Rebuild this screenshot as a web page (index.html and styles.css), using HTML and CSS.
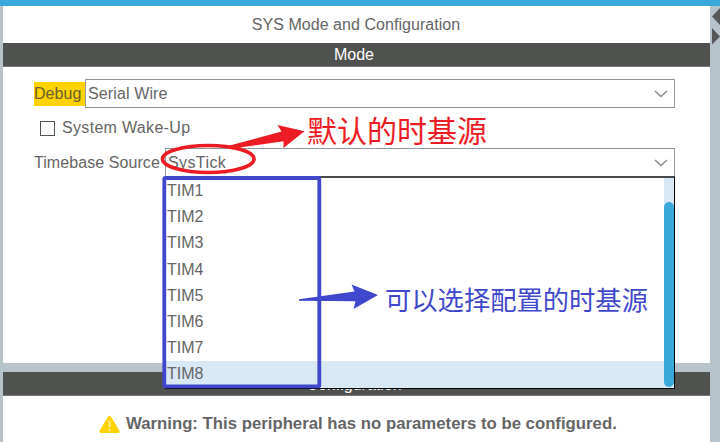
FILE: index.html
```html
<!DOCTYPE html>
<html lang="zh-CN">
<head>
<meta charset="utf-8">
<title>SYS Mode and Configuration</title>
<link rel="stylesheet" href="styles.css">
</head>
<body>
<div class="window">
  <main class="content">
    <section class="panel mode-panel">
      <h1 class="title">SYS Mode and Configuration</h1>
      <h2 class="bar">Mode</h2>
      <div class="form">
        <div class="row debug-row">
          <span class="label highlighted">Debug</span>
          <div class="combo"><span>Serial Wire</span>
            <svg class="chevron" width="14" height="8" viewBox="0 0 14 8"><path d="M1 1L7 6.5L13 1"/></svg>
          </div>
        </div>
        <div class="row check-row"><span class="checkbox"></span><span>System Wake-Up</span></div>
        <div class="row source-row">
          <span class="label">Timebase Source</span>
          <div class="combo"><span class="value">SysTick</span>
            <svg class="chevron" width="14" height="8" viewBox="0 0 14 8"><path d="M1 1L7 6.5L13 1"/></svg>
            <div class="dropdown">
              <ul class="options">
                <li>TIM1</li><li>TIM2</li><li>TIM3</li><li>TIM4</li><li>TIM5</li><li>TIM6</li><li>TIM7</li><li class="selected">TIM8</li>
              </ul>
              <div class="scrollbar"><div class="thumb"></div></div>
            </div>
          </div>
        </div>
      </div>
    </section>
    <section class="panel config-panel">
      <h2 class="bar">Configuration</h2>
      <p class="warning">
        <svg width="21" height="19" viewBox="0 0 21 19"><path d="M10.5 2.5L18.8 16.3H2.2Z" fill="#ffd200" stroke="#ffd200" stroke-width="3.4" stroke-linejoin="round"/><path d="M10.5 5.5V12M10.5 14V16" stroke="#fff3b0" stroke-width="1.6"/></svg>
        <span>Warning: This peripheral has no parameters to be configured.</span>
      </p>
    </section>
  </main>
  <aside class="divider">
    <svg width="10" height="40" viewBox="0 0 10 40"><path d="M2 10.5L10 2V19Z"/><path d="M2 22V38.5L10 30.5Z"/></svg>
  </aside>
</div>
<svg class="marks" width="720" height="442" viewBox="0 0 720 442">
  <rect x="164.3" y="178" width="155" height="208.3" rx="1" fill="none" stroke="#3f48cc" stroke-width="3.8"/>
  <path fill="#3f48cc" d="M299 299.2L354.5 291.5L351.5 284.5L378 295L353.5 309L355.5 301.3L299 300.8Z"/>
  <ellipse cx="208.3" cy="159" rx="45.8" ry="13.5" fill="none" stroke="#ed1c24" stroke-width="3.6"/>
  <path fill="#ed1c24" d="M226 146.5L281.5 131.5L277.5 125L304.5 131.3L283.5 148L283.5 141.2L243 147L232 149.5Z"/>
</svg>
<div class="note default-note">默认的时基源</div>
<div class="note option-note">可以选择配置的时基源</div>
</body>
</html>
```
FILE: styles.css
```css
* { box-sizing: border-box; }
body {
  margin: 0;
  width: 720px;
  height: 442px;
  overflow: hidden;
  position: relative;
  font: 16px/24px "Liberation Sans", Arial, sans-serif;
  color: #656565;
  background: #b7c3ca;
}
h1, h2, p, ul { margin: 0; padding: 0; font: inherit; }
.window {
  display: flex;
  height: 442px;
  border-top: 6px solid #39a9dc;
  padding-left: 3px;
}
.content {
  width: 707px;
  display: flex;
  flex-direction: column;
  gap: 9px;
}
.panel { background: #fff; }
.mode-panel { height: 357px; flex: none; }
.config-panel { flex: 1; }
.title {
  height: 37px;
  line-height: 37px;
  text-align: center;
  letter-spacing: 0.05px;
  padding-right: 1px;
}
.bar {
  height: 24px;
  line-height: 24px;
  text-align: center;
  background: #50524f;
  color: #fff;
  border-bottom: 1px solid #777;
  padding-right: 5px;
}
.config-panel .bar { line-height: 26px; }
.form { padding: 12px 35px 0 31px; }
.row { display: flex; align-items: center; }
.debug-row { height: 29px; letter-spacing: 0.12px; }
.label { width: 131px; flex: none; letter-spacing: 0.07px; }
.highlighted { width: 51px; background: #ffd200; color: #6b602c; }
.combo {
  flex: 1;
  height: 29px;
  display: flex;
  align-items: center;
  justify-content: space-between;
  border: 1px solid #91989d;
  padding: 0 6px 0 2px;
  position: relative;
}
.value { letter-spacing: 0.4px; }
.chevron { fill: none; stroke: #8c8c8c; stroke-width: 1.6; }
.check-row { height: 40px; gap: 7px; padding-left: 6px; letter-spacing: 0.32px; }
.checkbox { width: 15px; height: 15px; border: 1px solid #555; }
.source-row { height: 29px; }
.dropdown {
  position: absolute;
  top: 27px;
  left: -1px;
  right: -1px;
  height: 213px;
  display: flex;
  border: 1px solid #000;
  border-top: 2px solid #464a4c;
  background: #fff;
}
.options { flex: 1; list-style: none; }
.options li { height: 26.2px; line-height: 26px; padding-left: 1px; }
.options .selected { background: #d9e8f5; }
.scrollbar { width: 10px; padding-top: 24px; background: #d9e8f5; }
.thumb { height: 185px; border-radius: 5px; background: #39a9dc; }
.warning {
  display: flex;
  align-items: center;
  height: 56px;
  padding-left: 96px;
  gap: 6px;
  font-weight: bold;
  font-size: 16.75px;
  white-space: nowrap;
}
.divider { width: 10px; }
.divider svg { display: block; fill: #555759; }
.marks { position: absolute; left: 0; top: 0; }
.note { position: absolute; white-space: nowrap; font-family: "Noto Sans CJK SC", sans-serif; }
.default-note { left: 307px; top: 108px; font-size: 30px; line-height: 42px; color: #ed1c24; }
.option-note { left: 385px; top: 281px; font-size: 26.3px; line-height: 36px; color: #3f48cc; }
```
